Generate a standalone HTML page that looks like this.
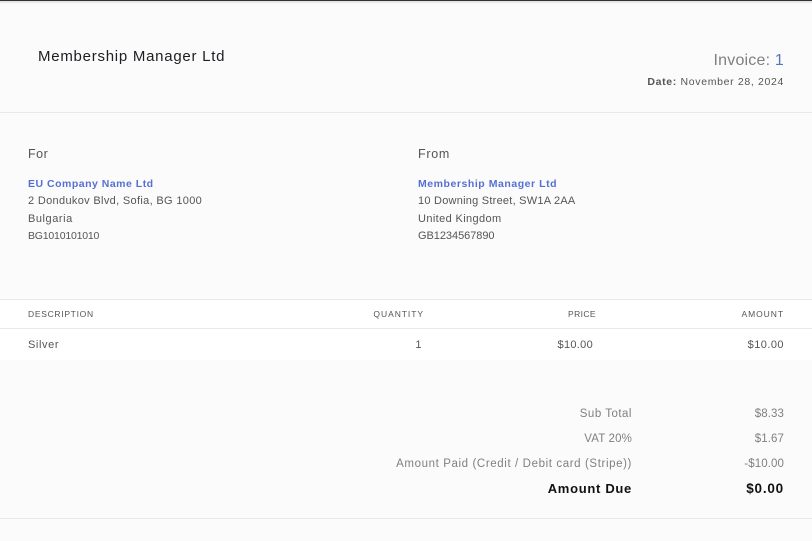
<!DOCTYPE html>
<html><head><meta charset="utf-8"><style>
html,body{margin:0;padding:0}
body{width:812px;height:541px;overflow:hidden;position:relative;background:#fbfbfc;font-family:"Liberation Sans",sans-serif;color:#555}
.t{position:absolute;white-space:nowrap;line-height:16px;font-size:11px;letter-spacing:.55px}
.r{text-align:right}
.l{position:absolute;left:0;width:812px;height:1px;background:#e6e8ea}
.b{color:#5570d2;font-weight:bold}
.h{font-size:8.5px;letter-spacing:.95px;color:#555}
.s{color:#808080;font-size:11.5px;letter-spacing:.5px}
</style></head><body>
<div style="position:absolute;left:0;top:0;width:812px;height:1px;background:#333"></div>
<div style="position:absolute;left:0;top:1px;width:812px;height:3px;background:linear-gradient(#dcdcdc,#fbfbfc)"></div>
<div class="t" style="left:38px;top:48.5px;font-size:15px;letter-spacing:.74px;color:#1e1e22">Membership Manager Ltd</div>
<div class="t r" style="right:28px;top:52.5px;font-size:16px;letter-spacing:.2px;color:#808080">Invoice: <span style="color:#5a74b8">1</span></div>
<div class="t r" style="right:28px;top:74px;font-size:10.5px;letter-spacing:.66px;color:#555"><b>Date:</b> November 28, 2024</div>
<div class="l" style="top:112px"></div>
<div class="t" style="left:28px;top:146px;font-size:12.5px;letter-spacing:.5px;color:#555">For</div>
<div class="t b" style="left:28px;top:176px;font-size:10.5px;letter-spacing:.5px">EU Company Name Ltd</div>
<div class="t" style="left:28px;top:193px;font-size:11px;letter-spacing:.33px">2 Dondukov Blvd, Sofia, BG 1000</div>
<div class="t" style="left:28px;top:211px">Bulgaria</div>
<div class="t" style="left:28px;top:228px;font-size:10.5px;letter-spacing:-.2px">BG1010101010</div>
<div class="t" style="left:418px;top:146px;font-size:12.5px;letter-spacing:.72px;color:#555">From</div>
<div class="t b" style="left:418px;top:176px;font-size:10.5px;letter-spacing:.54px">Membership Manager Ltd</div>
<div class="t" style="left:418px;top:193px;letter-spacing:.24px">10 Downing Street, SW1A 2AA</div>
<div class="t" style="left:418px;top:211px;letter-spacing:.38px">United Kingdom</div>
<div class="t" style="left:418px;top:228px;letter-spacing:-.05px">GB1234567890</div>
<div style="position:absolute;left:0;top:299px;width:812px;height:61px;background:#fff"></div>
<div class="l" style="top:299px"></div>
<div class="l" style="top:328px"></div>
<div class="t h" style="left:28px;top:306px;letter-spacing:.7px">DESCRIPTION</div>
<div class="t h r" style="right:388px;top:306px">QUANTITY</div>
<div class="t h r" style="right:216px;top:306px;letter-spacing:.4px">PRICE</div>
<div class="t h r" style="right:28px;top:306px">AMOUNT</div>
<div class="t" style="left:28px;top:336.5px;letter-spacing:.6px">Silver</div>
<div class="t r" style="right:390px;top:336.5px">1</div>
<div class="t r" style="right:219px;top:336.5px;letter-spacing:.3px">$10.00</div>
<div class="t r" style="right:28px;top:336.5px;letter-spacing:.45px">$10.00</div>
<div class="t s r" style="right:180px;top:405.5px">Sub Total</div>
<div class="t s r" style="right:28px;top:405.5px;letter-spacing:.1px">$8.33</div>
<div class="t s r" style="right:180px;top:430.5px;letter-spacing:.15px">VAT 20%</div>
<div class="t s r" style="right:28px;top:430.5px;letter-spacing:.1px">$1.67</div>
<div class="t s r" style="right:180px;top:455.5px;letter-spacing:.61px">Amount Paid (Credit / Debit card (Stripe))</div>
<div class="t s r" style="right:28px;top:455.5px;letter-spacing:.1px">-$10.00</div>
<div class="t r" style="right:180px;top:480.5px;font-size:13px;font-weight:bold;letter-spacing:.7px;color:#111">Amount Due</div>
<div class="t r" style="right:28px;top:480.5px;font-size:13.5px;font-weight:bold;letter-spacing:.8px;color:#111">$0.00</div>
<div class="l" style="top:518px"></div>
</body></html>
